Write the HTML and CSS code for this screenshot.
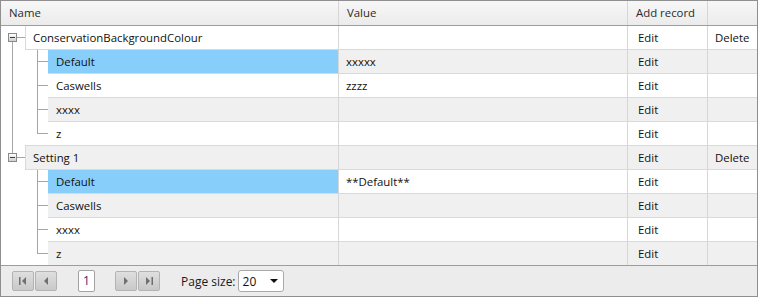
FILE: index.html
```html
<!DOCTYPE html>
<html>
<head>
<meta charset="utf-8">
<link rel="stylesheet" href="styles.css">
</head>
<body>
<div class="grid">
  <div class="head">
    <div class="hc c-name">Name</div>
    <div class="hc c-val">Value</div>
    <div class="hc c-add">Add record</div>
    <div class="hc c-del"></div>
  </div>

  <div class="row">
    <div class="c-name tree">
      <div class="g g-p1"><span class="exp"></span></div>
      <div class="lbl lbl-parent">ConservationBackgroundColour</div>
    </div>
    <div class="cell c-val"></div>
    <div class="cell c-add">Edit</div>
    <div class="cell c-del">Delete</div>
  </div>

  <div class="row alt">
    <div class="c-name tree">
      <div class="g g-v"></div>
      <div class="g2 t-mid"></div>
      <div class="lbl sel">Default</div>
    </div>
    <div class="cell c-val">xxxxx</div>
    <div class="cell c-add">Edit</div>
    <div class="cell c-del"></div>
  </div>

  <div class="row">
    <div class="c-name tree">
      <div class="g g-v"></div>
      <div class="g2 t-mid"></div>
      <div class="lbl">Caswells</div>
    </div>
    <div class="cell c-val">zzzz</div>
    <div class="cell c-add">Edit</div>
    <div class="cell c-del"></div>
  </div>

  <div class="row alt">
    <div class="c-name tree">
      <div class="g g-v"></div>
      <div class="g2 t-mid"></div>
      <div class="lbl">xxxx</div>
    </div>
    <div class="cell c-val"></div>
    <div class="cell c-add">Edit</div>
    <div class="cell c-del"></div>
  </div>

  <div class="row">
    <div class="c-name tree">
      <div class="g g-v"></div>
      <div class="g2 t-last"></div>
      <div class="lbl">z</div>
    </div>
    <div class="cell c-val"></div>
    <div class="cell c-add">Edit</div>
    <div class="cell c-del"></div>
  </div>

  <div class="row alt">
    <div class="c-name tree">
      <div class="g g-p2"><span class="exp"></span></div>
      <div class="lbl lbl-parent lbl-top">Setting 1</div>
    </div>
    <div class="cell c-val"></div>
    <div class="cell c-add">Edit</div>
    <div class="cell c-del">Delete</div>
  </div>

  <div class="row">
    <div class="c-name tree">
      <div class="g"></div>
      <div class="g2 t-mid"></div>
      <div class="lbl sel">Default</div>
    </div>
    <div class="cell c-val">**Default**</div>
    <div class="cell c-add">Edit</div>
    <div class="cell c-del"></div>
  </div>

  <div class="row alt">
    <div class="c-name tree">
      <div class="g"></div>
      <div class="g2 t-mid"></div>
      <div class="lbl">Caswells</div>
    </div>
    <div class="cell c-val"></div>
    <div class="cell c-add">Edit</div>
    <div class="cell c-del"></div>
  </div>

  <div class="row">
    <div class="c-name tree">
      <div class="g"></div>
      <div class="g2 t-mid"></div>
      <div class="lbl">xxxx</div>
    </div>
    <div class="cell c-val"></div>
    <div class="cell c-add">Edit</div>
    <div class="cell c-del"></div>
  </div>

  <div class="row alt">
    <div class="c-name tree">
      <div class="g"></div>
      <div class="g2 t-last"></div>
      <div class="lbl">z</div>
    </div>
    <div class="cell c-val"></div>
    <div class="cell c-add">Edit</div>
    <div class="cell c-del"></div>
  </div>

  <div class="pager">
    <div class="pbtn"><svg width="8" height="8" viewBox="0 0 8 8"><rect x="0" y="0" width="1.5" height="8" fill="#6f6f6f"/><polygon points="7,0 3,4 7,8" fill="#6f6f6f"/></svg></div>
    <div class="pbtn gap1"><svg width="8" height="8" viewBox="0 0 8 8"><polygon points="6,0 2,4 6,8" fill="#6f6f6f"/></svg></div>
    <div class="pnum">1</div>
    <div class="pbtn gap20"><svg width="8" height="8" viewBox="0 0 8 8"><polygon points="2,0 6,4 2,8" fill="#6f6f6f"/></svg></div>
    <div class="pbtn gap1"><svg width="8" height="8" viewBox="0 0 8 8"><polygon points="1,0 5,4 1,8" fill="#6f6f6f"/><rect x="6.5" y="0" width="1.5" height="8" fill="#6f6f6f"/></svg></div>
    <div class="psize">Page size:</div>
    <div class="dd"><span class="ddv">20</span><svg class="ddarrow" width="8" height="4" viewBox="0 0 8 4"><polygon points="0,0 8,0 4,4" fill="#111"/></svg></div>
  </div>
</div>
</body>
</html>
```

FILE: styles.css
```css
* { box-sizing: border-box; }
html, body { margin: 0; padding: 0; background: #fff; }
body {
  font-family: "Open Sans", "Noto Sans", sans-serif;
  font-size: 11.4px;
  color: #111;
}
.grid {
  width: 758px;
  height: 297px;
  border: 1px solid #8f8f8f;
  display: flex;
  flex-direction: column;
  background: #fff;
}
.head {
  display: flex;
  height: 25px;
  flex: none;
  border-bottom: 1px solid #9d9d9d;
  background: linear-gradient(#f7f7f7, #ebebeb);
}
.hc {
  line-height: 24px;
  padding-left: 8px;
  color: #2b2b2b;
}
.c-name { width: 337px; flex: none; }
.c-val { width: 289px; flex: none; border-left: 1px solid #d6d6d6; }
.c-add { width: 80px; flex: none; border-left: 1px solid #d6d6d6; }
.c-del { width: 50px; flex: none; border-left: 1px solid #d6d6d6; }

.row { display: flex; height: 24px; flex: none; }
.tree { display: flex; }
.g { width: 24px; height: 24px; flex: none; }
.g2 { width: 23px; height: 24px; flex: none; }
.lbl {
  flex: 1;
  height: 24px;
  border-bottom: 1px solid #d9d9d9;
  line-height: 23px;
  padding-left: 8px;
  white-space: nowrap;
}
.lbl-parent { border-left: 1px solid #d9d9d9; padding-left: 7px; }
.lbl-top { box-shadow: 0 -1px 0 #d9d9d9; }
.cell {
  height: 24px;
  border-bottom: 1px solid #d9d9d9;
  line-height: 23px;
  padding-left: 7px;
  white-space: nowrap;
}
.cell.c-add { padding-left: 10px; }
.alt .lbl, .alt .cell { background: #f0f0f0; }
.lbl.sel { background: #87cefa; }

/* tree lines */
.g-p1 {
  background:
    linear-gradient(#a6a6a6, #a6a6a6) no-repeat 11px 16px / 1px 8px,
    linear-gradient(#a6a6a6, #a6a6a6) no-repeat 16px 11px / 8px 1px;
}
.g-p2 {
  background:
    linear-gradient(#a6a6a6, #a6a6a6) no-repeat 11px 0 / 1px 7px,
    linear-gradient(#a6a6a6, #a6a6a6) no-repeat 16px 11px / 8px 1px;
}
.g-v {
  background: linear-gradient(#a6a6a6, #a6a6a6) no-repeat 11px 0 / 1px 24px;
}
.t-mid {
  background:
    linear-gradient(#a6a6a6, #a6a6a6) no-repeat 12px 0 / 1px 24px,
    linear-gradient(#a6a6a6, #a6a6a6) no-repeat 12px 11px / 11px 1px;
}
.t-last {
  background:
    linear-gradient(#a6a6a6, #a6a6a6) no-repeat 12px 0 / 1px 12px,
    linear-gradient(#a6a6a6, #a6a6a6) no-repeat 12px 11px / 11px 1px;
}
.exp {
  display: block;
  width: 9px;
  height: 9px;
  margin: 7px 0 0 7px;
  border: 1px solid #8a8a8a;
  background:
    linear-gradient(#3a3a3a, #3a3a3a) no-repeat 1px 3px / 5px 1px,
    linear-gradient(#ffffff, #cfcfcf);
}

/* pager */
.pager {
  flex: 1;
  margin-top: -1px;
  border-top: 1px solid #9d9d9d;
  background: #ececec;
  display: flex;
  align-items: center;
  padding-left: 11px;
}
.pbtn {
  width: 22px;
  height: 20px;
  border: 1px solid #b3b3b3;
  border-radius: 2px;
  background: linear-gradient(#dfdfdf, #c8c8c8);
  display: flex;
  align-items: center;
  justify-content: center;
}
.gap1 { margin-left: 1px; }
.gap20 { margin-left: 20px; }
.pnum {
  margin-left: 21px;
  width: 17px;
  height: 22px;
  background: #fff;
  border: 1px solid #a3a3a3;
  border-radius: 2px;
  text-align: center;
  line-height: 20px;
  font-size: 12px;
  color: #3b1f74;
}
.psize {
  margin-left: 21px;
  font-size: 12px;
  color: #1a1a1a;
}
.dd {
  margin-left: 2px;
  width: 46px;
  height: 22px;
  background: #fff;
  border: 1px solid #a9a9a9;
  border-radius: 3px;
  display: flex;
  align-items: center;
  font-size: 12px;
}
.ddv { padding-left: 4px; width: 31px; }
.ddarrow { display: block; }
```
